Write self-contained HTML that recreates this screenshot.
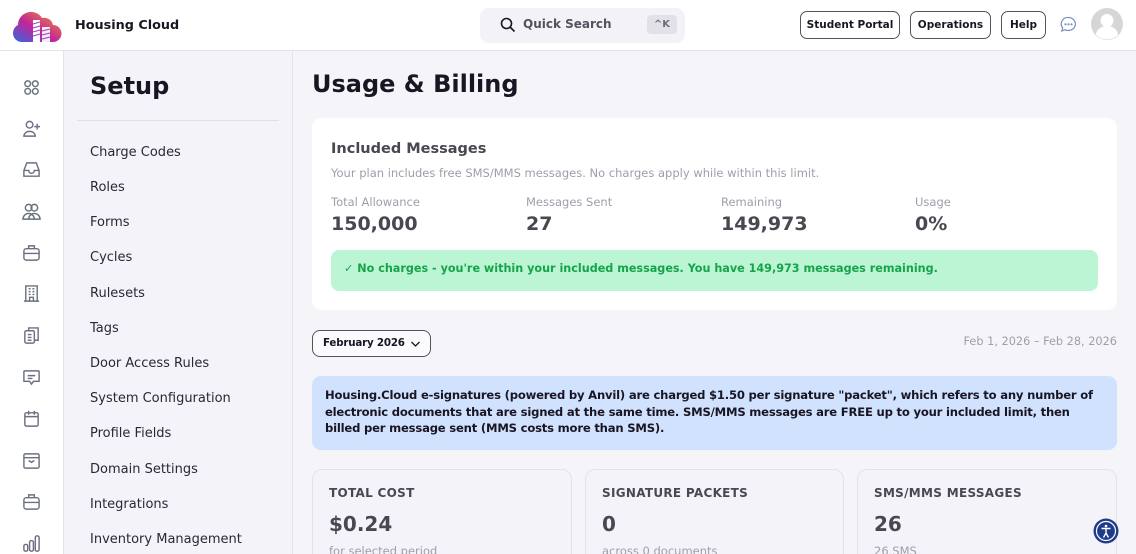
<!DOCTYPE html>
<html><head><meta charset="utf-8"><style>
*{box-sizing:border-box;margin:0;padding:0}
html{width:1136px;height:554px;overflow:hidden}
body{width:1136px;height:554px;overflow:hidden;font-family:"DejaVu Sans","Liberation Sans",sans-serif;background:#f5f5f9;color:#1a1523;position:relative}
.hdr{position:absolute;left:0;top:0;width:1136px;height:51px;background:#fff;border-bottom:1px solid #e3e2ea}
.brand{position:absolute;left:75px;top:18px;font-size:12.8px;font-weight:bold;color:#1a1523}
.search{position:absolute;left:480px;top:8px;width:205px;height:35px;background:#f3f2f7;border-radius:9px}
.search span.t{position:absolute;left:43px;top:9px;font-size:12px;font-weight:bold;color:#55525e}
.kbd{position:absolute;left:167px;top:7px;width:30px;height:19px;background:#e2e1e8;border-radius:4px;font-size:10px;font-weight:bold;color:#6e6b78;text-align:center;line-height:19px}
.btn{position:absolute;top:11px;height:28px;border:1px solid #55525e;border-radius:7px;font-size:10.5px;font-weight:bold;line-height:26px;text-align:center;background:#fff}
.rail{position:absolute;left:0;top:51px;width:64px;height:503px;background:#fff;border-right:1px solid #e3e2ea}
.rail svg{position:absolute;left:22px;width:19px;height:19px}
.side{position:absolute;left:64px;top:51px;width:229px;height:503px;background:#f4f3f9;border-right:1px solid #e3e2ea}
.side h1{position:absolute;left:26px;top:21px;font-size:24px;font-weight:bold}
.side .ln{position:absolute;left:13px;top:69px;width:202px;height:1px;background:#e0dfe7}
.side a{position:absolute;left:26px;font-size:13px;color:#2b2733;margin-top:1px}
h2.pt{position:absolute;left:312px;top:70px;font-size:24px;font-weight:bold}
.card{position:absolute;left:312px;top:118px;width:805px;height:192px;background:#fff;border-radius:10px}
.card .ti{position:absolute;left:19px;top:23px;font-size:14.5px;font-weight:bold;color:#4a4751}
.card .su{position:absolute;left:19px;top:48px;font-size:11.5px;color:#a09daa}
.st{position:absolute;top:77px}
.st .l{font-size:11.5px;color:#a09daa}
.st .v{font-size:19px;font-weight:bold;color:#4a4751;margin-top:4px}
.ok{position:absolute;left:19px;top:132px;width:767px;height:41px;background:#bbf5d3;border-radius:8px;font-size:11.2px;font-weight:bold;color:#17a34a;padding:12px 0 0 13px}
.sel{position:absolute;left:312px;top:330px;width:119px;height:27px;border:1px solid #55525e;border-radius:8px;font-size:10.3px;font-weight:bold;padding:6px 0 0 10px;background:#fbfbfd;letter-spacing:-0.2px}
.range{position:absolute;right:19px;top:335px;font-size:11.3px;color:#a09daa}
.info{position:absolute;left:312px;top:376px;width:805px;height:74px;background:#d1e2fe;border-radius:9px;font-size:11.6px;font-weight:bold;line-height:16.5px;color:#1a1523;padding:11px 13px;letter-spacing:-0.2px}
.m{position:absolute;top:469px;height:100px;background:#f4f3f9;border:1px solid #e3e2ea;border-radius:10px}
.m .a{position:absolute;left:16px;top:16px;font-size:12px;font-weight:bold;color:#4a4751;letter-spacing:.3px}
.m .b{position:absolute;left:16px;top:42px;font-size:20px;font-weight:bold;color:#4a4751}
.m .c{position:absolute;left:16px;top:74px;font-size:11.5px;color:#a09daa}
</style></head><body>
<div class="hdr">
<svg style="position:absolute;left:12px;top:8px" width="50" height="36" viewBox="0 0 50 36"><defs><linearGradient id="g" x1="0" y1="1" x2="1" y2="0"><stop offset="0" stop-color="#2d6be0"/><stop offset=".45" stop-color="#c2249a"/><stop offset="1" stop-color="#f59b2a"/></linearGradient></defs><path d="M9 34 A9 9 0 0 1 6 17 A13 13 0 0 1 30 10 A9 9 0 0 1 41 17 A8.5 8.5 0 0 1 41 34 Z" fill="url(#g)"/><rect x="21" y="12" width="7" height="22" fill="#fff"/><rect x="30" y="19" width="8" height="15" fill="#fff" opacity=".9"/><g stroke="#9a3fbf" stroke-width="1"><line x1="21" y1="16" x2="28" y2="14"/><line x1="21" y1="20" x2="28" y2="18"/><line x1="21" y1="24" x2="28" y2="22"/><line x1="21" y1="28" x2="28" y2="26"/><line x1="30" y1="23" x2="38" y2="21"/><line x1="30" y1="27" x2="38" y2="25"/><line x1="30" y1="31" x2="38" y2="29"/></g></svg>
<div class="brand">Housing Cloud</div>
<div class="search"><svg style="position:absolute;left:20px;top:9px" width="16" height="16" viewBox="0 0 16 16" fill="none" stroke="#1a1523" stroke-width="1.6"><circle cx="6.5" cy="6.5" r="5"/><line x1="10" y1="10" x2="14.5" y2="14.5"/></svg><span class="t">Quick Search</span><div class="kbd">^K</div></div>
<div class="btn" style="left:800px;width:100px">Student Portal</div>
<div class="btn" style="left:910px;width:81px">Operations</div>
<div class="btn" style="left:1001px;width:45px">Help</div>
<svg style="position:absolute;left:1060px;top:16px" width="17" height="17" viewBox="0 0 17 17" fill="none" stroke="#7b8fc0" stroke-width="1.2"><path d="M8.5 1.5a7 6.5 0 1 1-3.5 12.2L1.8 15l.9-3A6.5 6.5 0 0 1 8.5 1.5z"/><circle cx="5.5" cy="8.3" r=".5" fill="#7b8fc0"/><circle cx="8.5" cy="8.3" r=".5" fill="#7b8fc0"/><circle cx="11.5" cy="8.3" r=".5" fill="#7b8fc0"/></svg>
<svg style="position:absolute;left:1091px;top:8px" width="32" height="32" viewBox="0 0 32 32"><circle cx="16" cy="16" r="16" fill="#d6d6d9"/><circle cx="16" cy="12.5" r="6.5" fill="#fff"/><path d="M5 27a11 9 0 0 1 22 0a16 16 0 0 1-22 0z" fill="#fff"/></svg>
</div>
<div class="rail">
<svg style="top:27px" viewBox="0 0 20 20" fill="none" stroke="#6b7080" stroke-width="1.5"><circle cx="6" cy="6" r="3"/><circle cx="14" cy="6" r="3"/><circle cx="6" cy="14" r="3"/><circle cx="14" cy="14" r="3"/></svg>
<svg style="top:68px" viewBox="0 0 20 20" fill="none" stroke="#6b7080" stroke-width="1.5"><circle cx="8" cy="6" r="3.5"/><path d="M2 18a6 5 0 0 1 12 0z"/><path d="M16 5v6M13 8h6"/></svg>
<svg style="top:109px" viewBox="0 0 20 20" fill="none" stroke="#6b7080" stroke-width="1.5"><path d="M2 11l3-8h10l3 8v6H2z"/><path d="M2 11h5a3 3 0 0 0 6 0h5"/></svg>
<svg style="top:151px" viewBox="0 0 20 20" fill="none" stroke="#6b7080" stroke-width="1.5"><circle cx="7" cy="6" r="3.5"/><circle cx="13" cy="6" r="3.5"/><path d="M1 18a6 6 0 0 1 12 0zM7 18a6 6 0 0 1 12 0z"/></svg>
<svg style="top:192px" viewBox="0 0 20 20" fill="none" stroke="#6b7080" stroke-width="1.5"><rect x="2" y="6" width="16" height="12" rx="2.5"/><path d="M7 6V3h6v3M2 11h16"/></svg>
<svg style="top:233px" viewBox="0 0 20 20" fill="none" stroke="#6b7080" stroke-width="1.5"><path d="M4 18V2h12v16M2 18h16M8 18v-4h4v4M7 5h2M11 5h2M7 8h2M11 8h2M7 11h2M11 11h2"/></svg>
<svg style="top:275px" viewBox="0 0 20 20" fill="none" stroke="#6b7080" stroke-width="1.5"><rect x="3" y="5" width="10" height="13" rx="1.5"/><path d="M7 5V2h10v13h-4M6 9h4M6 12h4M6 15h4"/></svg>
<svg style="top:317px" viewBox="0 0 20 20" fill="none" stroke="#6b7080" stroke-width="1.5"><path d="M3 3h14a1 1 0 0 1 1 1v10H12l-2 3-2-3H2V4a1 1 0 0 1 1-1z"/><path d="M6 8h8M6 11h5"/></svg>
<svg style="top:358px" viewBox="0 0 20 20" fill="none" stroke="#6b7080" stroke-width="1.5"><rect x="3" y="4" width="14" height="14" rx="1.5"/><path d="M7 2v4M13 2v4M3 8h14"/></svg>
<svg style="top:400px" viewBox="0 0 20 20" fill="none" stroke="#6b7080" stroke-width="1.5"><rect x="2" y="3" width="16" height="15" rx="1.5"/><path d="M2 7h16M7 10l3 2 3-2"/></svg>
<svg style="top:441px" viewBox="0 0 20 20" fill="none" stroke="#6b7080" stroke-width="1.5"><rect x="2" y="6" width="16" height="12" rx="2.5"/><path d="M7 6V3h6v3M2 11h16"/></svg>
<svg style="top:483px" viewBox="0 0 20 20" fill="none" stroke="#6b7080" stroke-width="1.5"><rect x="2" y="11" width="4" height="7" rx="1.5"/><rect x="8" y="7" width="4" height="11" rx="1.5"/><rect x="14" y="2" width="4" height="16" rx="1.5"/></svg>
</div>
<div class="side"><h1>Setup</h1><div class="ln"></div>
<a style="top:93px">Charge Codes</a><a style="top:128px">Roles</a><a style="top:163px">Forms</a><a style="top:198px">Cycles</a><a style="top:234px">Rulesets</a><a style="top:269px">Tags</a><a style="top:304px">Door Access Rules</a><a style="top:339px">System Configuration</a><a style="top:374px">Profile Fields</a><a style="top:410px">Domain Settings</a><a style="top:445px">Integrations</a><a style="top:480px">Inventory Management</a>
</div>
<h2 class="pt">Usage &amp; Billing</h2>
<div class="card"><div class="ti">Included Messages</div><div class="su">Your plan includes free SMS/MMS messages. No charges apply while within this limit.</div>
<div class="st" style="left:19px"><div class="l">Total Allowance</div><div class="v">150,000</div></div>
<div class="st" style="left:214px"><div class="l">Messages Sent</div><div class="v">27</div></div>
<div class="st" style="left:409px"><div class="l">Remaining</div><div class="v">149,973</div></div>
<div class="st" style="left:603px"><div class="l">Usage</div><div class="v">0%</div></div>
<div class="ok">✓ No charges - you're within your included messages. You have 149,973 messages remaining.</div></div>
<div class="sel">February 2026 <svg style="position:absolute;left:97px;top:9px" width="11" height="8" viewBox="0 0 11 8" fill="none" stroke="#1a1523" stroke-width="1.3"><path d="M1.5 2l4 4 4-4"/></svg></div>
<div class="range">Feb 1, 2026 – Feb 28, 2026</div>
<div class="info">Housing.Cloud e-signatures (powered by Anvil) are charged $1.50 per signature "packet", which refers to any number of electronic documents that are signed at the same time. SMS/MMS messages are FREE up to your included limit, then billed per message sent (MMS costs more than SMS).</div>
<div class="m" style="left:312px;width:260px"><div class="a">TOTAL COST</div><div class="b">$0.24</div><div class="c">for selected period</div></div>
<div class="m" style="left:585px;width:259px"><div class="a">SIGNATURE PACKETS</div><div class="b">0</div><div class="c">across 0 documents</div></div>
<div class="m" style="left:857px;width:260px"><div class="a">SMS/MMS MESSAGES</div><div class="b">26</div><div class="c">26 SMS</div></div>
<svg style="position:absolute;left:1093px;top:518px" width="26" height="26" viewBox="0 0 26 26"><circle cx="13" cy="13" r="12.5" fill="#1e3a8a"/><circle cx="13" cy="13" r="9.5" fill="none" stroke="#fff" stroke-width="1.2"/><circle cx="13" cy="8" r="1.3" fill="#fff"/><path d="M8.5 10.5h9M13 10.5v4.5M13 15l-2.5 4.5M13 15l2.5 4.5" stroke="#fff" stroke-width="1.4" fill="none"/></svg>
</body></html>
